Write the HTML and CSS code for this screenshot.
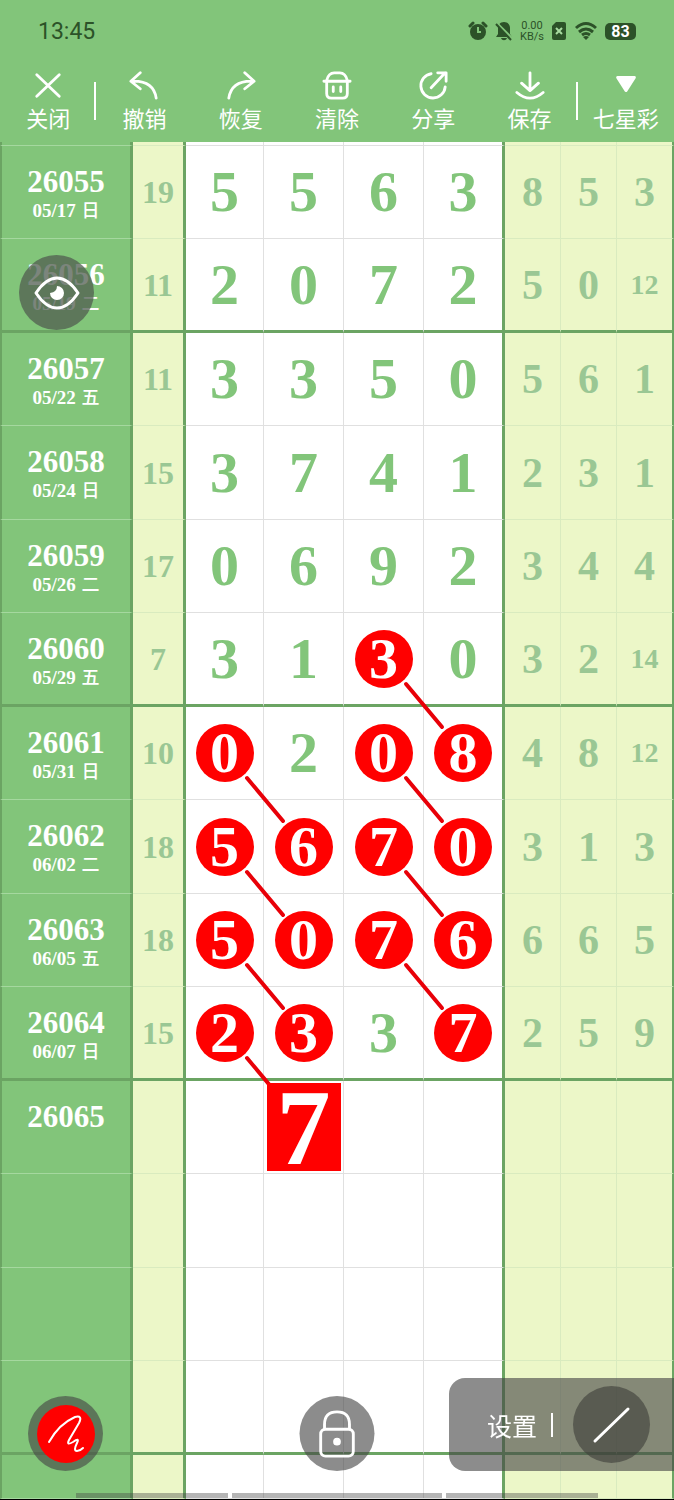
FILE: index.html
```html
<!DOCTYPE html>
<html lang="zh-CN">
<head>
    <meta charset="UTF-8">
    <meta name="viewport" content="width=device-width, initial-scale=1.0">
    <title>七星彩</title>
    <link rel="stylesheet" href="styles.css">
</head>
<body>
    <svg class="defs" aria-hidden="true">
        <symbol id="link" viewBox="0 0 80 94">
            <path d="M22 25L58 68" stroke="#e80008" stroke-width="4" stroke-linecap="round"/>
        </symbol>
    </svg>

    <header class="header">
        <div class="status">
            <span class="clock">13:45</span>
            <div class="status-icons">
                <svg width="20" height="20" viewBox="0 0 20 20">
                    <circle cx="10" cy="11" r="8" fill="#2c5228"/>
                    <path d="M2 5L5 2M18 5L15 2" stroke="#2c5228" stroke-width="3" stroke-linecap="round"/>
                    <path d="M10 6v5h3" fill="none" stroke="#82c57a" stroke-width="2"/>
                </svg>
                <svg width="18" height="20" viewBox="0 0 18 20">
                    <path d="M9 1c4 0 6 3 6 6v6l2 3H1l2-3V7c0-3 2-6 6-6zM6 17h6c-1 3-5 3-6 0z" fill="#2c5228"/>
                    <path d="M2 2L18 18" stroke="#82c57a" stroke-width="2"/>
                    <path d="M1 3L16 19" stroke="#2c5228" stroke-width="2"/>
                </svg>
                <span class="speed">0.00<br>KB/s</span>
                <svg width="16" height="20" viewBox="0 0 16 20">
                    <path d="M5 1h8q2 0 2 2v14q0 2-2 2H3q-2 0-2-2V5z" fill="#2c5228"/>
                    <path d="M5 7l6 6M11 7l-6 6" stroke="#a8dba0" stroke-width="2"/>
                </svg>
                <svg width="24" height="20" viewBox="0 0 24 20">
                    <path d="M2 7q10-9 20 0M5 11q7-6 14 0M8 14q4-3 8 0" fill="none" stroke="#2c5228" stroke-width="3"/>
                    <path d="M9 16q3-2 6 0l-3 3z" fill="#2c5228"/>
                </svg>
                <span class="battery">83</span>
            </div>
        </div>

        <nav class="toolbar">
            <button class="tool line-right">
                <svg width="30" height="30" viewBox="0 0 32 32"><path d="M4 5L28 28M28 5L4 28"/></svg>
                关闭
            </button>
            <button class="tool">
                <svg width="30" height="30" viewBox="0 0 32 32"><path d="M12 3L2 12L12 20M3 12Q26 11 29 30"/></svg>
                撤销
            </button>
            <button class="tool">
                <svg width="30" height="30" viewBox="0 0 32 32"><path d="M20 3L30 12L20 20M29 12Q6 11 3 30"/></svg>
                恢复
            </button>
            <button class="tool">
                <svg width="30" height="30" viewBox="0 0 32 32"><path d="M2 12H30M5 12v13q0 5 5 5h12q5 0 5-5V12M5 11q2-8 8-8h6q6 0 8 8M12 18v5M20 18v5"/></svg>
                清除
            </button>
            <button class="tool">
                <svg width="30" height="30" viewBox="0 0 32 32"><path d="M14 4A13 13 0 1 0 29 18M14 19L29 3M21 3h9v9"/></svg>
                分享
            </button>
            <button class="tool line-right">
                <svg width="30" height="30" viewBox="0 0 32 32"><path d="M16 3v19M7 14l9 8 9-8M2 24q14 12 28 0"/></svg>
                保存
            </button>
            <button class="tool">
                <svg width="30" height="30" viewBox="0 0 32 32"><path class="solid" d="M7 8H25L16 22z"/></svg>
                七星彩
            </button>
        </nav>
    </header>

    <main>
        <table class="board">
            <colgroup>
                <col class="col-issue"><col class="col-sum">
                <col class="col-first"><col class="col-num"><col class="col-num"><col class="col-last">
                <col class="col-side"><col class="col-side"><col class="col-end">
            </colgroup>
            <tbody>
                <tr class="sliver"><th></th><td class="sum"></td><td></td><td></td><td></td><td class="edge"></td><td class="side"></td><td class="side"></td><td class="side end"></td></tr>
                <tr>
                    <th>26055<small>05/17 <b>日</b></small></th><td class="sum">19</td>
                    <td>5</td><td>5</td><td>6</td><td class="edge">3</td>
                    <td class="side">8</td><td class="side">5</td><td class="side end">3</td>
                </tr>
                <tr class="thick">
                    <th>26056<small>05/19 <b>二</b></small></th><td class="sum">11</td>
                    <td>2</td><td>0</td><td>7</td><td class="edge">2</td>
                    <td class="side">5</td><td class="side">0</td><td class="side end two">12</td>
                </tr>
                <tr>
                    <th>26057<small>05/22 <b>五</b></small></th><td class="sum">11</td>
                    <td>3</td><td>3</td><td>5</td><td class="edge">0</td>
                    <td class="side">5</td><td class="side">6</td><td class="side end">1</td>
                </tr>
                <tr>
                    <th>26058<small>05/24 <b>日</b></small></th><td class="sum">15</td>
                    <td>3</td><td>7</td><td>4</td><td class="edge">1</td>
                    <td class="side">2</td><td class="side">3</td><td class="side end">1</td>
                </tr>
                <tr>
                    <th>26059<small>05/26 <b>二</b></small></th><td class="sum">17</td>
                    <td>0</td><td>6</td><td>9</td><td class="edge">2</td>
                    <td class="side">3</td><td class="side">4</td><td class="side end">4</td>
                </tr>
                <tr class="thick">
                    <th>26060<small>05/29 <b>五</b></small></th><td class="sum">7</td>
                    <td>3</td><td>1</td>
                    <td><span class="ball">3<svg><use href="#link"/></svg></span></td>
                    <td class="edge">0</td>
                    <td class="side">3</td><td class="side">2</td><td class="side end two">14</td>
                </tr>
                <tr>
                    <th>26061<small>05/31 <b>日</b></small></th><td class="sum">10</td>
                    <td><span class="ball">0<svg><use href="#link"/></svg></span></td>
                    <td>2</td>
                    <td><span class="ball">0<svg><use href="#link"/></svg></span></td>
                    <td class="edge"><span class="ball">8</span></td>
                    <td class="side">4</td><td class="side">8</td><td class="side end two">12</td>
                </tr>
                <tr>
                    <th>26062<small>06/02 <b>二</b></small></th><td class="sum">18</td>
                    <td><span class="ball">5<svg><use href="#link"/></svg></span></td>
                    <td><span class="ball">6</span></td>
                    <td><span class="ball">7<svg><use href="#link"/></svg></span></td>
                    <td class="edge"><span class="ball">0</span></td>
                    <td class="side">3</td><td class="side">1</td><td class="side end">3</td>
                </tr>
                <tr>
                    <th>26063<small>06/05 <b>五</b></small></th><td class="sum">18</td>
                    <td><span class="ball">5<svg><use href="#link"/></svg></span></td>
                    <td><span class="ball">0</span></td>
                    <td><span class="ball">7<svg><use href="#link"/></svg></span></td>
                    <td class="edge"><span class="ball">6</span></td>
                    <td class="side">6</td><td class="side">6</td><td class="side end">5</td>
                </tr>
                <tr class="thick">
                    <th>26064<small>06/07 <b>日</b></small></th><td class="sum">15</td>
                    <td><span class="ball">2<svg><use href="#link"/></svg></span></td>
                    <td><span class="ball">3</span></td>
                    <td>3</td>
                    <td class="edge"><span class="ball">7</span></td>
                    <td class="side">2</td><td class="side">5</td><td class="side end">9</td>
                </tr>
                <tr>
                    <th>26065</th><td class="sum"></td>
                    <td></td><td><span class="pick">7</span></td><td></td><td class="edge"></td>
                    <td class="side"></td><td class="side"></td><td class="side end"></td>
                </tr>
                <tr><th></th><td class="sum"></td><td></td><td></td><td></td><td class="edge"></td><td class="side"></td><td class="side"></td><td class="side end"></td></tr>
                <tr><th></th><td class="sum"></td><td></td><td></td><td></td><td class="edge"></td><td class="side"></td><td class="side"></td><td class="side end"></td></tr>
                <tr class="thick"><th></th><td class="sum"></td><td></td><td></td><td></td><td class="edge"></td><td class="side"></td><td class="side"></td><td class="side end"></td></tr>
                <tr class="last"><th></th><td class="sum"></td><td></td><td></td><td></td><td class="edge"></td><td class="side"></td><td class="side"></td><td class="side end"></td></tr>
            </tbody>
        </table>
    </main>

    <button class="round eye" aria-label="显示">
        <svg width="46" height="34" viewBox="0 0 46 34">
            <path d="M2 17Q12 2 23 2T44 17Q34 32 23 32T2 17z" fill="none" stroke="#fff" stroke-width="3" stroke-linejoin="round"/>
            <path d="M23 10q0 6-7 7a7 7 0 1 0 7-7z" fill="#fff"/>
        </svg>
    </button>

    <button class="round pen" aria-label="画笔">
        <svg width="58" height="58" viewBox="0 0 58 58">
            <circle cx="29" cy="29" r="29" fill="#f00"/>
            <path d="M12 37Q22 19 38 12Q46 10 42 18L32 35Q29 41 36 37Q43 32 40 38Q36 46 40 46Q43 46 46 43" fill="none" stroke="#fff" stroke-width="2" stroke-linecap="round"/>
        </svg>
    </button>

    <button class="round lock" aria-label="锁定">
        <svg width="37" height="48" viewBox="0 0 38 50" fill="none" stroke="#fff" stroke-width="3">
            <rect x="2" y="20" width="34" height="28" rx="5"/>
            <path d="M6 20V15Q6 2 19 2T32 15V20"/>
            <circle cx="19" cy="33" r="4" fill="#fff" stroke="none"/>
        </svg>
    </button>

    <div class="settings">
        <button class="settings-btn">设置</button>
        <span class="bar"></span>
        <button class="stroke-btn" aria-label="直线">
            <svg width="40" height="40" viewBox="0 0 40 40"><path d="M3 36L36 4" stroke="#fff" stroke-width="3" stroke-linecap="round"/></svg>
        </button>
    </div>

    <div class="gesture"><i></i><i></i><i></i></div>
</body>
</html>
```
FILE: styles.css
```css
* {
    margin: 0;
    padding: 0;
    box-sizing: border-box;
}
body {
    background: #000;
    font-family: "Noto Sans", "Noto Sans CJK SC", sans-serif;
}
button {
    border: none;
    background: none;
    color: #fff;
    font-family: "Noto Sans CJK SC", sans-serif;
    cursor: pointer;
}
.defs {
    display: none;
}

/* header */
.header {
    height: 142px;
    background: #82c57a;
}
.status {
    display: flex;
    justify-content: space-between;
    align-items: center;
    height: 62px;
    padding: 0 38px;
    color: #2c5228;
}
.clock {
    font-family: Roboto, sans-serif;
    font-size: 23px;
}
.status-icons {
    display: flex;
    align-items: center;
    gap: 7px;
}
.speed {
    font-family: Roboto, sans-serif;
    font-size: 11px;
    line-height: 11px;
    text-align: center;
}
.battery {
    width: 31px;
    height: 17px;
    border-radius: 5px;
    background: #2c5228;
    color: #fff;
    font-family: Roboto, sans-serif;
    font-size: 16px;
    font-weight: bold;
    line-height: 18px;
    text-align: center;
}
.toolbar {
    display: grid;
    grid-template-columns: repeat(7, 1fr);
}
.tool {
    position: relative;
    display: flex;
    flex-direction: column;
    align-items: center;
    gap: 1px;
    padding-top: 8px;
    font-size: 22px;
    line-height: 32px;
    white-space: nowrap;
}
.tool svg {
    fill: none;
    stroke: #fff;
    stroke-width: 3;
    stroke-linecap: round;
    stroke-linejoin: round;
}
.tool .solid {
    fill: #fff;
}
.line-right::after {
    content: "";
    position: absolute;
    right: 0;
    top: 20px;
    width: 2px;
    height: 38px;
    background: #fff;
}

/* number board */
.board {
    width: 100%;
    table-layout: fixed;
    border-collapse: separate;
    border-spacing: 0;
    font-family: "Liberation Serif", "Noto Sans CJK SC", serif;
    font-weight: bold;
}
.col-issue { width: 133px; }
.col-sum { width: 53px; }
.col-first { width: 78px; }
.col-num { width: 80px; }
.col-last { width: 81px; }
.col-side { width: 56px; }
.col-end { width: 57px; }
.board tr {
    height: 94px;
}
.board tr:nth-child(even) {
    height: 93px;
}
.board tr.sliver {
    height: 4px;
}
.board tr.last {
    height: 44px;
}
.board th {
    padding-top: 21px;
    border-left: 2px solid #6ba463;
    border-right: 3px solid #6ba463;
    border-bottom: 1px solid #a5d89f;
    background: #82c57a;
    color: #fff;
    font-size: 31px;
    line-height: 30px;
    vertical-align: top;
}
.board .sliver th {
    padding: 0;
}
.board small {
    display: block;
    font-size: 19px;
    line-height: 28px;
}
.board small b {
    margin-left: 1px;
    font-size: 18px;
    font-weight: 500;
}
.board td {
    border-right: 1px solid #e0e0e0;
    border-bottom: 1px solid #e0e0e0;
    background: #fff;
    color: #82c57a;
    font-size: 58px;
    line-height: 60px;
    text-align: center;
    vertical-align: middle;
}
.board td.sum,
.board td.side {
    border-color: #d9ebbf;
    background: #ecf7c8;
    color: #9ac794;
}
.board td.sum {
    border-right: 3px solid #6ba463;
    font-size: 32px;
}
.board td.side {
    font-size: 42px;
}
.board td.two {
    font-size: 28px;
}
.board td.edge {
    border-right: 3px solid #6ba463;
}
.board td.end {
    border-right: 2px solid #6ba463;
}
.board .thick th,
.board .thick td {
    border-bottom: 3px solid #6ba463;
}
.ball {
    position: relative;
    display: block;
    width: 58px;
    height: 58px;
    margin: 0 auto;
    border-radius: 50%;
    background: #f00;
    color: #fff;
    line-height: 58px;
}
.ball svg {
    position: absolute;
    left: 50%;
    top: 50%;
    width: 80px;
    height: 94px;
}
.pick {
    position: relative;
    display: block;
    width: 74px;
    height: 88px;
    margin: 0 auto;
    background: #f00;
    color: #fff;
    font-size: 108px;
    line-height: 90px;
}

/* floating controls */
.round {
    position: fixed;
    display: flex;
    justify-content: center;
    align-items: center;
    width: 75px;
    height: 75px;
    border-radius: 50%;
    background: rgba(70, 70, 70, 0.62);
}
.eye {
    left: 19px;
    top: 255px;
    background: rgba(80, 92, 80, 0.75);
}
.pen {
    left: 28px;
    bottom: 29px;
}
.lock {
    left: 50%;
    bottom: 29px;
    transform: translateX(-50%);
}
.settings {
    position: fixed;
    right: 0;
    bottom: 29px;
    display: flex;
    align-items: center;
    height: 93px;
    padding: 0 24px 0 38px;
    border-radius: 16px 0 0 16px;
    background: rgba(70, 70, 70, 0.62);
}
.settings-btn {
    font-size: 25px;
}
.bar {
    width: 2px;
    height: 24px;
    margin: 0 20px 0 14px;
    background: #fff;
}
.stroke-btn {
    display: flex;
    justify-content: center;
    align-items: center;
    width: 77px;
    height: 77px;
    border-radius: 50%;
    background: rgba(60, 60, 55, 0.6);
}
.gesture {
    position: fixed;
    left: 76px;
    right: 76px;
    bottom: 2px;
    display: grid;
    grid-template-columns: 152fr 210fr 152fr;
    gap: 4px;
    height: 5px;
}
.gesture i {
    background: rgba(70, 70, 70, 0.4);
}
```
